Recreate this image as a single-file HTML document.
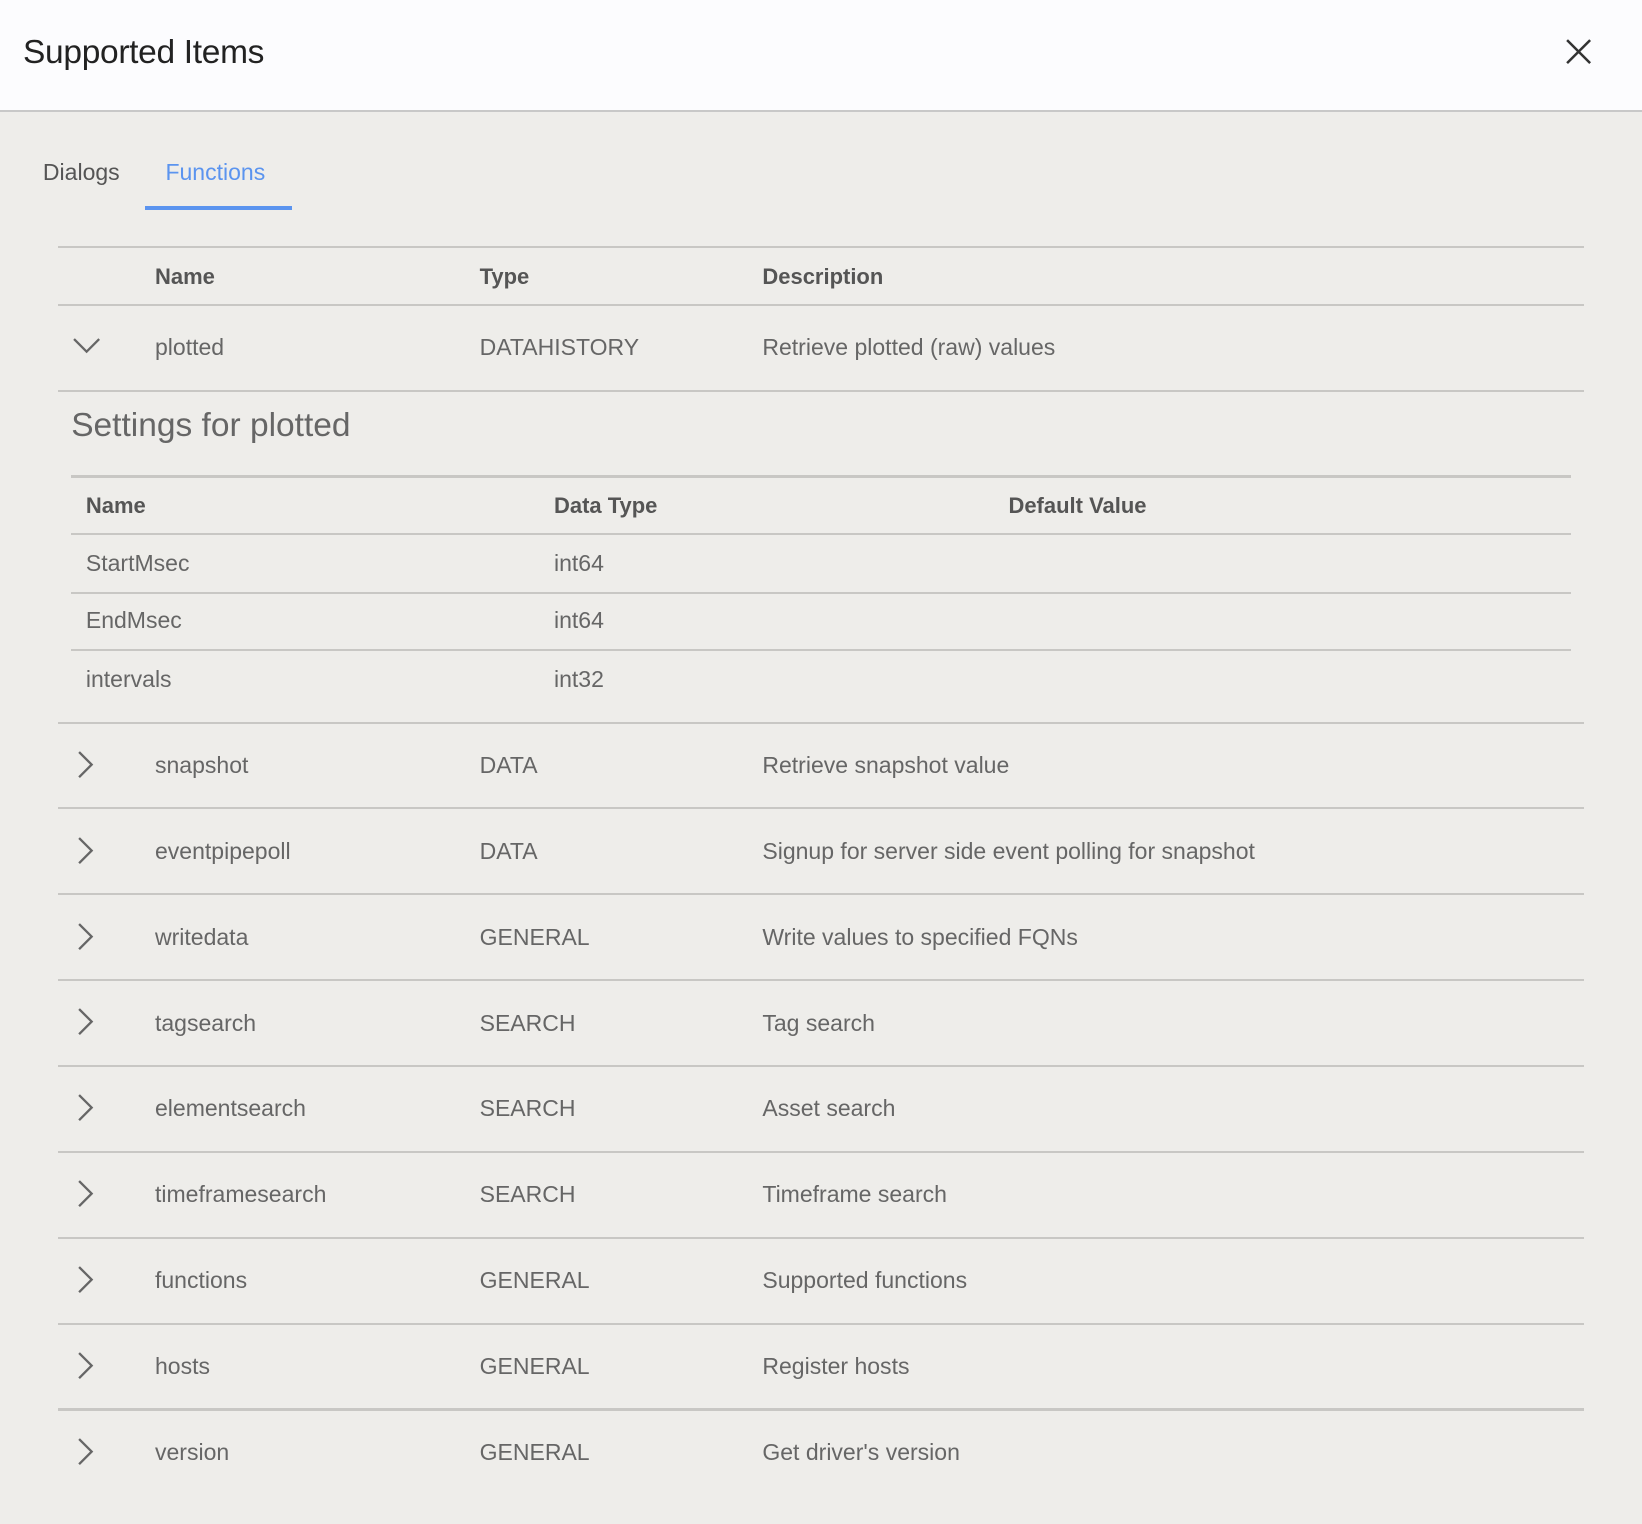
<!DOCTYPE html>
<html><head><meta charset="utf-8">
<style>
html,body{margin:0;padding:0;}
body{width:1568px;height:1455px;zoom:1.0472;background:#eeedea;font-family:"Liberation Sans",Arial,sans-serif;position:relative;overflow:hidden;}
.hdr{position:absolute;left:0;top:0;width:1568px;height:105px;background:#fcfcfe;border-bottom:2px solid #c8c8c8;}
.title{position:absolute;left:22px;top:32px;font-size:32px;color:#222;letter-spacing:-0.3px;}
.close{position:absolute;left:1494px;top:36px;}
.tab{position:absolute;top:152px;font-size:22px;}
.ul{position:absolute;left:138px;top:197px;width:141px;height:4px;background:#5b94ef;}
.line{position:absolute;height:2px;background:#c8c7c4;}
.t{position:absolute;font-size:22px;color:#666;white-space:nowrap;line-height:26px;}
.h{color:#555;font-weight:bold;font-size:21px;}
.chev{position:absolute;left:70px;}
</style></head><body>
<div class="hdr">
<div class="title">Supported Items</div>
<svg class="close" width="26" height="26" viewBox="0 0 26 26"><path d="M2 2L24 24M24 2L2 24" stroke="#333" stroke-width="2.4" fill="none"/></svg>
</div>
<div class="tab" style="left:41px;color:#555;">Dialogs</div>
<div class="tab" style="left:158px;color:#5b94ef;">Functions</div>
<div class="ul"></div>

<div class="line" style="left:55px;width:1458px;top:235px"></div>
<div class="t h" style="left:148px;top:251px">Name</div>
<div class="t h" style="left:458px;top:251px">Type</div>
<div class="t h" style="left:728px;top:251px">Description</div>
<div class="line" style="left:55px;width:1458px;top:290px"></div>

<svg class="chev" style="top:322px" width="26" height="16" viewBox="0 0 26 16"><path d="M1 2L13 14L25 2" stroke="#666" stroke-width="2.2" fill="none"/></svg>
<div class="t" style="left:148px;top:319px">plotted</div>
<div class="t" style="left:458px;top:319px">DATAHISTORY</div>
<div class="t" style="left:728px;top:319px">Retrieve plotted (raw) values</div>
<div class="line" style="left:55px;width:1458px;top:372px"></div>

<div class="t" style="left:68px;top:388px;font-size:32px;line-height:38px;color:#666;">Settings for plotted</div>
<div class="line" style="left:68px;width:1432px;top:454px"></div>
<div class="t h" style="left:82px;top:470px">Name</div>
<div class="t h" style="left:529px;top:470px">Data Type</div>
<div class="t h" style="left:963px;top:470px">Default Value</div>
<div class="line" style="left:68px;width:1432px;top:509px"></div>
<div class="t" style="left:82px;top:525px">StartMsec</div>
<div class="t" style="left:529px;top:525px">int64</div>
<div class="line" style="left:68px;width:1432px;top:565px"></div>
<div class="t" style="left:82px;top:580px">EndMsec</div>
<div class="t" style="left:529px;top:580px">int64</div>
<div class="line" style="left:68px;width:1432px;top:620px"></div>
<div class="t" style="left:82px;top:636px">intervals</div>
<div class="t" style="left:529px;top:636px">int32</div>
<div class="line" style="left:55px;width:1458px;top:689px"></div>

<div id="rows"></div>
<script>
var rows=[["snapshot","DATA","Retrieve snapshot value"],["eventpipepoll","DATA","Signup for server side event polling for snapshot"],["writedata","GENERAL","Write values to specified FQNs"],["tagsearch","SEARCH","Tag search"],["elementsearch","SEARCH","Asset search"],["timeframesearch","SEARCH","Timeframe search"],["functions","GENERAL","Supported functions"],["hosts","GENERAL","Register hosts"],["version","GENERAL","Get driver's version"]];
var h="";
rows.forEach(function(r,i){var top=690+i*82;var ty=top+28;
h+='<svg class="chev" style="left:74px;top:'+(top+27)+'px" width="16" height="26" viewBox="0 0 16 26"><path d="M2 1L14 13L2 25" stroke="#666" stroke-width="2.2" fill="none"/></svg>';
h+='<div class="t" style="left:148px;top:'+ty+'px">'+r[0]+'</div><div class="t" style="left:458px;top:'+ty+'px">'+r[1]+'</div><div class="t" style="left:728px;top:'+ty+'px">'+r[2]+'</div>';
if(i<8)h+='<div class="line" style="left:55px;width:1458px;top:'+(top+81)+'px"></div>';});
document.getElementById("rows").outerHTML=h;
</script>
</body></html>
